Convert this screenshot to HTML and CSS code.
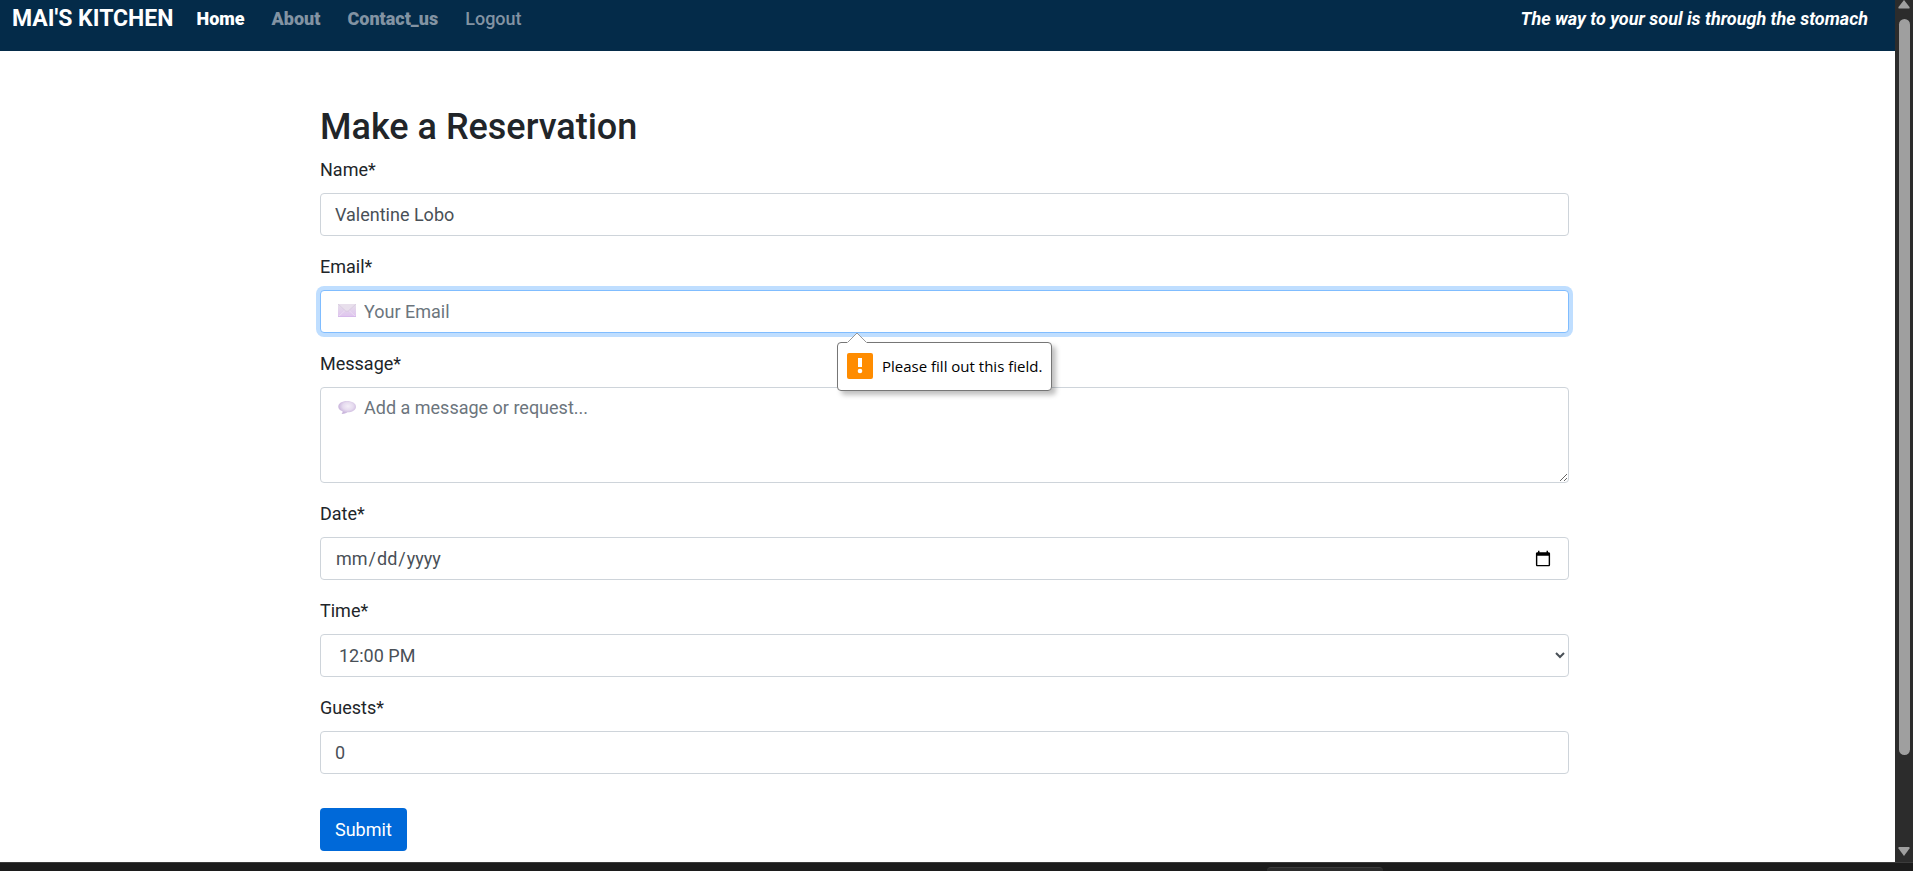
FILE: index.html
```html
<!DOCTYPE html>
<html lang="en">
<head>
  <meta charset="utf-8">
  <title>Mai's Kitchen - Make a Reservation</title>
  <link rel="stylesheet" href="styles.css">
</head>
<body>
  <div class="viewport">
    <div class="page">
      <header class="navbar">
        <a class="brand" href="#">MAI'S KITCHEN</a>
        <nav class="nav-links">
          <a class="nav-link strong active" href="#">Home</a>
          <a class="nav-link strong" href="#">About</a>
          <a class="nav-link strong" href="#">Contact_us</a>
          <a class="nav-link" href="#">Logout</a>
        </nav>
        <span class="tagline">The way to your soul is through the stomach</span>
      </header>
      <main class="content">
        <form class="form">
          <h1 class="title">Make a Reservation</h1>
          <div class="group">
            <label for="name">Name*</label>
            <input class="control" id="name" type="text" value="Valentine Lobo">
          </div>
          <div class="group">
            <label for="email">Email*</label>
            <div class="field">
              <input class="control with-icon focused" id="email" type="email" placeholder="Your Email">
              <svg class="icon" viewBox="0 0 18 13" aria-hidden="true">
                <defs>
                  <linearGradient id="env" x1="0" y1="0" x2="0" y2="1">
                    <stop offset="0" stop-color="#e6dfea"/>
                    <stop offset="1" stop-color="#dfc4ef"/>
                  </linearGradient>
                </defs>
                <rect width="18" height="13" fill="url(#env)"/>
                <path d="M0 13 7 6.5M18 13 11 6.5" stroke="#eadcf2" fill="none"/>
                <path d="M0 0 7.5 6.8Q9 8 10.5 6.8L18 0" fill="#e8dfec" stroke="#d3c2db" stroke-width=".6"/>
                <path d="M0 12.5H18" stroke="#d6b9ea"/>
              </svg>
              <div class="tooltip" role="alert">
                <svg class="tip-arrow" viewBox="0 0 20 11" aria-hidden="true">
                  <path d="M0 11 1 10 10 1 19 10 20 11Z" fill="#fff"/>
                  <path d="M1 10 10 1 19 10" fill="none" stroke="#999"/>
                </svg>
                <svg class="tip-icon" viewBox="0 0 26 26" aria-hidden="true">
                  <rect width="26" height="26" rx="2" fill="#ff8c00"/>
                  <rect x="11" y="5" width="4" height="9" fill="#fff"/>
                  <circle cx="13" cy="18" r="2.3" fill="#fff"/>
                </svg>
                <span>Please fill out this field.</span>
              </div>
            </div>
          </div>
          <div class="group">
            <label for="message">Message*</label>
            <div class="field">
              <textarea class="control with-icon" id="message" rows="3" placeholder="Add a message or request..."></textarea>
              <svg class="icon" viewBox="0 0 18 13" aria-hidden="true">
                <defs>
                  <radialGradient id="bub" cx=".55" cy=".4" r=".6">
                    <stop offset="0" stop-color="#f4eef8"/>
                    <stop offset=".5" stop-color="#e6dbef"/>
                    <stop offset="1" stop-color="#c3acd8"/>
                  </radialGradient>
                </defs>
                <path d="M9 0C14 0 18 2.3 18 5.7S14 11.300 9.500 11.300C8 12.300 5.500 13 3.500 13 4.500 12 4.800 11.300 4.500 10.300 2 9.300 .3 7.700 .3 5.700 .3 2.300 4 0 9 0Z" fill="url(#bub)"/>
              </svg>
            </div>
          </div>
          <div class="group">
            <label for="date">Date*</label>
            <input class="control" id="date" type="date">
          </div>
          <div class="group">
            <label for="time">Time*</label>
            <select class="control" id="time"><option>12:00 PM</option></select>
          </div>
          <div class="group">
            <label for="guests">Guests*</label>
            <input class="control" id="guests" type="number" value="0">
          </div>
          <button class="submit" type="submit">Submit</button>
        </form>
      </main>
    </div>
    <div class="scrollbar" aria-hidden="true">
      <svg class="scroll-arrow" viewBox="0 0 12 9"><path d="M6 0 11.500 7Q12 8.500 11 8.500H1Q0 8.500 .5 7Z" fill="#9f9f9f"/></svg>
      <div class="scroll-track"><div class="scroll-thumb"></div></div>
      <svg class="scroll-arrow" viewBox="0 0 12 9"><path d="M6 9 .5 1.500Q0 0 1 0H11Q12 0 11.500 1.500Z" fill="#9f9f9f"/></svg>
    </div>
  </div>
  <div class="taskbar"><div class="taskbar-tab"></div></div>
</body>
</html>
```
FILE: styles.css
```css
* {
  box-sizing: border-box;
}

body {
  margin: 0;
  height: 100vh;
  display: flex;
  flex-direction: column;
  overflow: hidden;
  background: #fff;
  color: #212529;
  font: 400 18px/27px Roboto, sans-serif;
}

.viewport {
  flex: 1;
  min-height: 0;
  display: flex;
}

.page {
  flex: 1;
  min-width: 0;
  overflow: hidden;
}

.navbar {
  display: flex;
  align-items: flex-start;
  height: 51px;
  padding: 2px 27px 0 12px;
  background: #042b49;
  line-height: 34px;
}

.navbar a {
  color: #8293a3;
  text-decoration: none;
}

.navbar .brand {
  margin-right: 23px;
  color: #fff;
  font-size: 23px;
  font-weight: 700;
}

.nav-links {
  display: flex;
  gap: 27px;
}

.nav-link {
  font-weight: 500;
}

.nav-link.strong {
  font-weight: 900;
}

.navbar .active {
  color: #fff;
}

.tagline {
  margin-left: auto;
  color: #fff;
  font-style: italic;
  font-weight: 700;
}

.content {
  padding: 55px 6px 0 0;
}

.form {
  max-width: 1249px;
  margin: 0 auto;
}

.title {
  margin: 0 0 8px;
  font-size: 36px;
  font-weight: 500;
  line-height: 43px;
}

.group {
  margin-bottom: 18px;
}

label {
  display: block;
  margin-bottom: 11px;
  line-height: 25px;
}

.field {
  position: relative;
}

.control {
  display: block;
  width: 100%;
  height: 43px;
  padding: 7px 14px;
  border: 1px solid #ced4da;
  border-radius: 4px;
  background: #fff;
  color: #495057;
  font: inherit;
}

.control::placeholder {
  color: #6c757d;
  opacity: 1;
}

textarea.control {
  height: 96px;
  padding-top: 6px;
  resize: vertical;
}

select.control {
  padding-right: 2px;
}

.control.with-icon {
  padding-left: 43px;
}

.focused {
  border-color: #80bdff;
  box-shadow: 0 0 0 4px #bfdeff;
}

.icon {
  position: absolute;
  top: 14px;
  left: 18px;
  width: 18px;
  height: 13px;
}

.tooltip {
  position: absolute;
  top: 52px;
  left: 517px;
  z-index: 1;
  display: flex;
  align-items: center;
  gap: 9px;
  height: 49px;
  padding: 0 9px 2px;
  border: 1px solid #767676;
  border-radius: 4px;
  background: #fff;
  box-shadow: 4px 4px 5px rgba(0, 0, 0, 0.25);
  color: #000;
  font: 15px/22px "Open Sans", sans-serif;
  white-space: nowrap;
}

.tip-arrow {
  position: absolute;
  top: -11px;
  left: 9px;
  width: 20px;
  height: 11px;
}

.tip-icon {
  width: 26px;
  height: 26px;
}

.submit {
  height: 43px;
  margin-top: 16px;
  padding: 0 15px;
  border: 0;
  border-radius: 4px;
  background: #0069d9;
  color: #fff;
  font: inherit;
}

.scrollbar {
  display: flex;
  flex-direction: column;
  align-items: center;
  width: 18px;
  padding-bottom: 6px;
  background: #2c2c2c;
}

.scroll-arrow {
  width: 12px;
  height: 9px;
}

.scroll-track {
  flex: 1;
  padding: 10px 0;
}

.scroll-thumb {
  width: 11px;
  height: 90%;
  border-radius: 6px;
  background: #9f9f9f;
}

.taskbar {
  display: flex;
  justify-content: flex-end;
  height: 9px;
  padding: 4px 530px 0 0;
  border-top: 1px solid #3c3c3c;
  background: #1c1c1c;
}

.taskbar-tab {
  width: 116px;
  height: 4px;
  border-top: 1px solid #3c3c3c;
  border-radius: 6px 6px 0 0;
  background: #2b2b2b;
}
```
